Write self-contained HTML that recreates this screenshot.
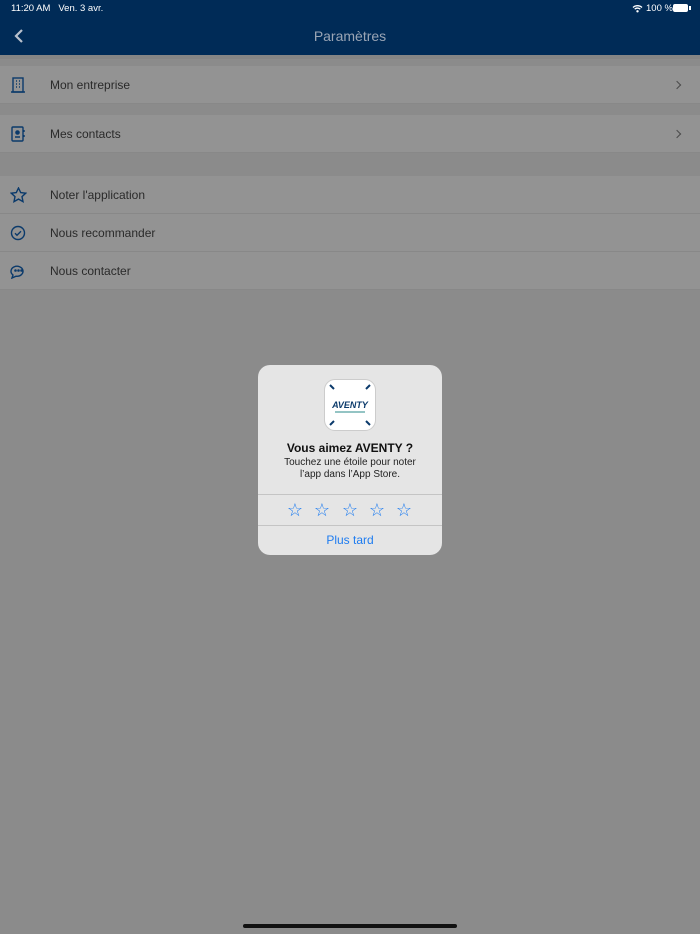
<!DOCTYPE html>
<html><head><meta charset="utf-8"><style>
*{margin:0;padding:0;box-sizing:border-box}
body{width:700px;height:934px;overflow:hidden;background:#8b8b8b;font-family:"Liberation Sans",sans-serif;position:relative}
.nav{position:absolute;left:0;top:0;width:700px;height:55px;background:#002b57;color:#fff}
.st{position:absolute;top:3px;font-size:9.5px;color:#fff}
.title{position:absolute;top:28px;width:100%;text-align:center;font-size:14px;color:#9aa5b5}
.row{position:absolute;left:0;width:700px;height:38px;background:#939393;border-bottom:1px solid #888}
.row span{position:absolute;left:50px;top:12px;font-size:12px;color:#2a2a2a}
.row svg.i{position:absolute;left:10px;top:11px}
.chev{position:absolute;right:20px;top:16px;width:6px;height:6px;border-top:1.3px solid #4a4a4a;border-right:1.3px solid #4a4a4a;transform:rotate(45deg)}
.dlg{position:absolute;left:258px;top:365px;width:184px;height:190px;background:#e5e5e5;border-radius:12px;text-align:center}
.app{position:absolute;left:66px;top:14px;width:52px;height:52px;background:#fff;border-radius:11px;border:1px solid #ccc}
.h{position:absolute;top:76px;width:100%;font-size:12px;font-weight:bold;color:#111}
.s{position:absolute;top:92px;width:100%;font-size:10px;line-height:12px;color:#222}
.sep{position:absolute;left:0;width:184px;height:1px;background:#c4c4c4}
.star{position:absolute;top:135px;width:20px;margin-left:-10px;text-align:center;font-size:18px;color:#1e7cf0}
.later{position:absolute;top:168px;width:100%;font-size:12px;color:#1e7cf0}
.home{position:absolute;left:243px;top:924px;width:214px;height:4px;border-radius:2px;background:#111}
</style></head><body>
<div class="nav">
<div class="st" style="left:11px">11:20 AM&nbsp;&nbsp; Ven. 3 avr.</div>
<div class="st" style="left:646px">100 %</div>
<svg style="position:absolute;left:632px;top:4px" width="11" height="9" viewBox="0 0 11 9"><path d="M1 3.5a6.5 6.5 0 0 1 9 0M2.7 5.2a4 4 0 0 1 5.6 0" stroke="#fff" stroke-width="1.3" fill="none"/><circle cx="5.5" cy="7.3" r="1.2" fill="#fff"/></svg>
<div style="position:absolute;left:673px;top:4px;width:15px;height:8px;background:#fff;border-radius:2px"></div>
<div style="position:absolute;left:689px;top:6px;width:1.5px;height:4px;background:#fff"></div>
<svg style="position:absolute;left:14px;top:29px" width="10" height="14" viewBox="0 0 10 14"><path d="M8 1L2 7l6 6" stroke="#b8c0cc" stroke-width="2.2" fill="none"/></svg>
<div class="title">Paramètres</div>
</div>
<div style="position:absolute;top:55px;left:0;width:700px;height:4px;background:#858585"></div>
<div class="row" style="top:66px"><svg class="i" width="16" height="16" viewBox="0 0 16 16" fill="none" stroke="#0b3a6b" stroke-width="1.4"><rect x="3" y="1" width="10" height="14"/><path d="M6 4h1M9 4h1M6 7h1M9 7h1M6 10h1M9 10h1M1 15h14"/></svg><span>Mon entreprise</span><div class="chev"></div></div>
<div class="row" style="top:115px"><svg class="i" width="16" height="16" viewBox="0 0 16 16" fill="none" stroke="#0b3a6b" stroke-width="1.4"><rect x="2" y="1" width="11" height="14" rx="1"/><circle cx="7.5" cy="6.5" r="1.6" fill="#0b3a6b"/><path d="M5 11h5M14 4v2M14 9v2"/></svg><span>Mes contacts</span><div class="chev"></div></div>
<div class="row" style="top:176px"><svg class="i" width="17" height="16" viewBox="0 0 17 16" fill="none" stroke="#0b3a6b" stroke-width="1.4"><path d="M8.5 1l2.2 4.6 5 .6-3.7 3.4 1 5-4.5-2.5-4.5 2.5 1-5L1.3 6.2l5-.6z"/></svg><span>Noter l'application</span></div>
<div class="row" style="top:214px"><svg class="i" width="16" height="16" viewBox="0 0 16 16" fill="none" stroke="#0b3a6b" stroke-width="1.4"><circle cx="8" cy="8" r="6.5"/><path d="M5 8.2l2 2 4-4"/></svg><span>Nous recommander</span></div>
<div class="row" style="top:252px"><svg class="i" width="16" height="16" viewBox="0 0 16 16" fill="none" stroke="#0b3a6b" stroke-width="1.4"><path d="M3 12a6 5 0 1 1 3 1.2L2 15z"/><circle cx="5.5" cy="7.5" r=".6" fill="#0b3a6b"/><circle cx="8.5" cy="7.5" r=".6" fill="#0b3a6b"/><circle cx="11.5" cy="7.5" r=".6" fill="#0b3a6b"/></svg><span>Nous contacter</span></div>
<div class="dlg">
<div class="app"><svg width="50" height="50" viewBox="0 0 50 50"><g stroke="#0b3a6b" stroke-width="2"><path d="M5 5l4 4M45 5l-4 4M5 45l4-4M45 45l-4-4"/></g><text x="25" y="28" text-anchor="middle" font-family="Liberation Sans" font-size="9" font-weight="bold" font-style="italic" fill="#0b3a6b">AVENTY</text><path d="M10 32h30" stroke="#2a8a8a" stroke-width="1"/></svg></div>
<div class="h">Vous aimez AVENTY ?</div>
<div class="s">Touchez une étoile pour noter<br>l’app dans l’App Store.</div>
<div class="sep" style="top:129px"></div>
<div class="star" style="left:37px">☆</div>
<div class="star" style="left:64px">☆</div>
<div class="star" style="left:92px">☆</div>
<div class="star" style="left:119px">☆</div>
<div class="star" style="left:146px">☆</div>
<div class="sep" style="top:160px"></div>
<div class="later">Plus tard</div>
</div>
<div class="home"></div>
</body></html>
